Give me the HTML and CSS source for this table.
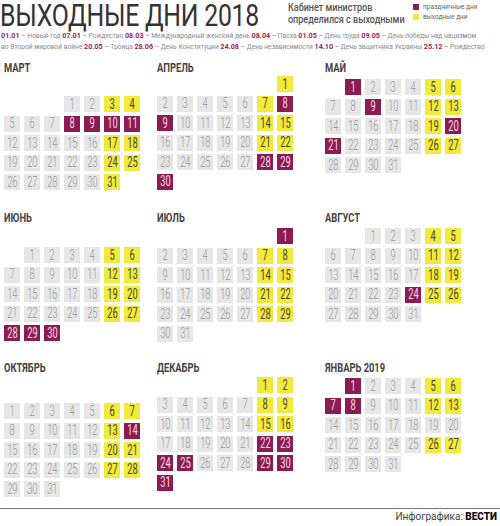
FILE: index.html
```html
<!DOCTYPE html>
<html lang="ru">
<head>
<meta charset="utf-8">
<title>Выходные дни 2018</title>
<link rel="stylesheet" href="styles.css">
</head>
<body>
<div class="page">
  <header class="top">
    <h1 class="title"><span>ВЫХОДНЫЕ ДНИ 2018</span></h1>
    <div class="sub"><span>Кабинет министров<br>определился с выходными</span></div>
    <ul class="legend">
      <li><span class="sw sw-h"></span>праздничные дни</li>
      <li><span class="sw sw-y"></span>выходные дни</li>
    </ul>
  </header>

  <div class="holidays">
    <p><b>01.01</b> – Новый год <b>07.01</b> – Рождество <b>08.03</b> – Международный женский день <b>08.04</b> – Пасха <b>01.05</b> – День труда <b>09.05</b> – День победы над нацизмом</p>
    <p>во Второй мировой войне <b>20.05</b> – Троица <b>28.06</b> – День Конституции <b>24.08</b> – День независимости <b>14.10</b> – День защитника Украины <b>25.12</b> – Рождество</p>
  </div>

  <div class="months">
    <section class="month m-mar">
      <h2>МАРТ</h2>
      <div class="cal">
        <i class="e"></i><i class="e"></i><i class="e"></i><i><span>1</span></i><i><span>2</span></i><i class="y"><span>3</span></i><i class="y"><span>4</span></i>
        <i><span>5</span></i><i><span>6</span></i><i><span>7</span></i><i class="h"><span>8</span></i><i class="h"><span>9</span></i><i class="h"><span>10</span></i><i class="h"><span>11</span></i>
        <i><span>12</span></i><i><span>13</span></i><i><span>14</span></i><i><span>15</span></i><i><span>16</span></i><i class="y"><span>17</span></i><i class="y"><span>18</span></i>
        <i><span>19</span></i><i><span>20</span></i><i><span>21</span></i><i><span>22</span></i><i><span>23</span></i><i class="y"><span>24</span></i><i class="y"><span>25</span></i>
        <i><span>26</span></i><i><span>27</span></i><i><span>28</span></i><i><span>29</span></i><i><span>30</span></i><i class="y"><span>31</span></i>
      </div>
    </section>
    <section class="month m-apr">
      <h2>АПРЕЛЬ</h2>
      <div class="cal">
        <i class="e"></i><i class="e"></i><i class="e"></i><i class="e"></i><i class="e"></i><i class="e"></i><i class="y"><span>1</span></i>
        <i><span>2</span></i><i><span>3</span></i><i><span>4</span></i><i><span>5</span></i><i><span>6</span></i><i class="y"><span>7</span></i><i class="h"><span>8</span></i>
        <i class="h"><span>9</span></i><i><span>10</span></i><i><span>11</span></i><i><span>12</span></i><i><span>13</span></i><i class="y"><span>14</span></i><i class="y"><span>15</span></i>
        <i><span>16</span></i><i><span>17</span></i><i><span>18</span></i><i><span>19</span></i><i><span>20</span></i><i class="y"><span>21</span></i><i class="y"><span>22</span></i>
        <i><span>23</span></i><i><span>24</span></i><i><span>25</span></i><i><span>26</span></i><i><span>27</span></i><i class="h"><span>28</span></i><i class="h"><span>29</span></i>
        <i class="h"><span>30</span></i>
      </div>
    </section>
    <section class="month m-may">
      <h2>МАЙ</h2>
      <div class="cal">
        <i class="e"></i><i class="h"><span>1</span></i><i><span>2</span></i><i><span>3</span></i><i><span>4</span></i><i class="y"><span>5</span></i><i class="y"><span>6</span></i>
        <i><span>7</span></i><i><span>8</span></i><i class="h"><span>9</span></i><i><span>10</span></i><i><span>11</span></i><i class="y"><span>12</span></i><i class="y"><span>13</span></i>
        <i><span>14</span></i><i><span>15</span></i><i><span>16</span></i><i><span>17</span></i><i><span>18</span></i><i class="y"><span>19</span></i><i class="h"><span>20</span></i>
        <i class="h"><span>21</span></i><i><span>22</span></i><i><span>23</span></i><i><span>24</span></i><i><span>25</span></i><i class="y"><span>26</span></i><i class="y"><span>27</span></i>
        <i><span>28</span></i><i><span>29</span></i><i><span>30</span></i><i><span>31</span></i>
      </div>
    </section>

    <section class="month m-jun">
      <h2>ИЮНЬ</h2>
      <div class="cal">
        <i class="e"></i><i><span>1</span></i><i><span>2</span></i><i><span>3</span></i><i><span>4</span></i><i class="y"><span>5</span></i><i class="y"><span>6</span></i>
        <i><span>7</span></i><i><span>8</span></i><i><span>9</span></i><i><span>10</span></i><i><span>11</span></i><i class="y"><span>12</span></i><i class="y"><span>13</span></i>
        <i><span>14</span></i><i><span>15</span></i><i><span>16</span></i><i><span>17</span></i><i><span>18</span></i><i class="y"><span>19</span></i><i class="y"><span>20</span></i>
        <i><span>21</span></i><i><span>22</span></i><i><span>23</span></i><i><span>24</span></i><i><span>25</span></i><i class="y"><span>26</span></i><i class="y"><span>27</span></i>
        <i class="h"><span>28</span></i><i class="h"><span>29</span></i><i class="h"><span>30</span></i>
      </div>
    </section>
    <section class="month m-jul">
      <h2>ИЮЛЬ</h2>
      <div class="cal">
        <i class="e"></i><i class="e"></i><i class="e"></i><i class="e"></i><i class="e"></i><i class="e"></i><i class="h"><span>1</span></i>
        <i><span>2</span></i><i><span>3</span></i><i><span>4</span></i><i><span>5</span></i><i><span>6</span></i><i class="y"><span>7</span></i><i class="y"><span>8</span></i>
        <i><span>9</span></i><i><span>10</span></i><i><span>11</span></i><i><span>12</span></i><i><span>13</span></i><i class="y"><span>14</span></i><i class="y"><span>15</span></i>
        <i><span>16</span></i><i><span>17</span></i><i><span>18</span></i><i><span>19</span></i><i><span>20</span></i><i class="y"><span>21</span></i><i class="y"><span>22</span></i>
        <i><span>23</span></i><i><span>24</span></i><i><span>25</span></i><i><span>26</span></i><i><span>27</span></i><i class="y"><span>28</span></i><i class="y"><span>29</span></i>
        <i><span>30</span></i><i><span>31</span></i>
      </div>
    </section>
    <section class="month m-aug">
      <h2>АВГУСТ</h2>
      <div class="cal">
        <i class="e"></i><i class="e"></i><i><span>1</span></i><i><span>2</span></i><i><span>3</span></i><i class="y"><span>4</span></i><i class="y"><span>5</span></i>
        <i><span>6</span></i><i><span>7</span></i><i><span>8</span></i><i><span>9</span></i><i><span>10</span></i><i class="y"><span>11</span></i><i class="y"><span>12</span></i>
        <i><span>13</span></i><i><span>14</span></i><i><span>15</span></i><i><span>16</span></i><i><span>17</span></i><i class="y"><span>18</span></i><i class="y"><span>19</span></i>
        <i><span>20</span></i><i><span>21</span></i><i><span>22</span></i><i><span>23</span></i><i class="h"><span>24</span></i><i class="y"><span>25</span></i><i class="y"><span>26</span></i>
        <i><span>27</span></i><i><span>28</span></i><i><span>29</span></i><i><span>30</span></i><i><span>31</span></i>
      </div>
    </section>

    <section class="month m-oct">
      <h2>ОКТЯБРЬ</h2>
      <div class="cal">
        <i><span>1</span></i><i><span>2</span></i><i><span>3</span></i><i><span>4</span></i><i><span>5</span></i><i class="y"><span>6</span></i><i class="y"><span>7</span></i>
        <i><span>8</span></i><i><span>9</span></i><i><span>10</span></i><i><span>11</span></i><i><span>12</span></i><i class="y"><span>13</span></i><i class="h"><span>14</span></i>
        <i><span>15</span></i><i><span>16</span></i><i><span>17</span></i><i><span>18</span></i><i><span>19</span></i><i class="y"><span>20</span></i><i class="y"><span>21</span></i>
        <i><span>22</span></i><i><span>23</span></i><i><span>24</span></i><i><span>25</span></i><i><span>26</span></i><i class="y"><span>27</span></i><i class="y"><span>28</span></i>
        <i><span>29</span></i><i><span>30</span></i><i><span>31</span></i>
      </div>
    </section>
    <section class="month m-dec">
      <h2>ДЕКАБРЬ</h2>
      <div class="cal">
        <i class="e"></i><i class="e"></i><i class="e"></i><i class="e"></i><i class="e"></i><i class="y"><span>1</span></i><i class="y"><span>2</span></i>
        <i><span>3</span></i><i><span>4</span></i><i><span>5</span></i><i><span>6</span></i><i><span>7</span></i><i class="y"><span>8</span></i><i class="y"><span>9</span></i>
        <i><span>10</span></i><i><span>11</span></i><i><span>12</span></i><i><span>13</span></i><i><span>14</span></i><i class="y"><span>15</span></i><i class="y"><span>16</span></i>
        <i><span>17</span></i><i><span>18</span></i><i><span>19</span></i><i><span>20</span></i><i><span>21</span></i><i class="h"><span>22</span></i><i class="h"><span>23</span></i>
        <i class="h"><span>24</span></i><i class="h"><span>25</span></i><i><span>26</span></i><i><span>27</span></i><i><span>28</span></i><i class="h"><span>29</span></i><i class="h"><span>30</span></i>
        <i class="h"><span>31</span></i>
      </div>
    </section>
    <section class="month m-jan">
      <h2>ЯНВАРЬ 2019</h2>
      <div class="cal">
        <i class="e"></i><i class="h"><span>1</span></i><i><span>2</span></i><i><span>3</span></i><i><span>4</span></i><i class="y"><span>5</span></i><i class="y"><span>6</span></i>
        <i class="h"><span>7</span></i><i class="h"><span>8</span></i><i><span>9</span></i><i><span>10</span></i><i><span>11</span></i><i class="y"><span>12</span></i><i class="y"><span>13</span></i>
        <i><span>14</span></i><i><span>15</span></i><i><span>16</span></i><i><span>17</span></i><i><span>18</span></i><i><span>19</span></i><i><span>20</span></i>
        <i><span>21</span></i><i><span>22</span></i><i><span>23</span></i><i><span>24</span></i><i><span>25</span></i><i class="y"><span>26</span></i><i class="y"><span>27</span></i>
        <i><span>28</span></i><i><span>29</span></i><i><span>30</span></i><i><span>31</span></i>
      </div>
    </section>
  </div>

  <footer class="foot">
    <span class="credit">Инфографика: <b>ВЕСТИ</b></span>
  </footer>
</div>
</body>
</html>
```

FILE: styles.css
```css
* { box-sizing: border-box; }
html, body { margin: 0; padding: 0; background: #fff; }
body { font-family: Roboto, "Liberation Sans", sans-serif; color: #333; }

.page { width: 500px; height: 526px; overflow: hidden; }

.top { display: flex; align-items: flex-start; height: 30px; }
.title {
  margin: 0; font-size: 32px; font-weight: 400; line-height: 30px;
  color: #333; white-space: nowrap;
  width: 288px; flex: none;
}
.title span {
  display: inline-block; transform: scaleX(0.775); transform-origin: left center;
  letter-spacing: -0.3px; margin-right: -76px;
}
.sub {
  font-size: 10.5px; line-height: 12px; font-weight: 500; color: #555;
  width: 125px; flex: none; padding-top: 2px; white-space: nowrap;
}
.sub span {
  display: inline-block; transform: scaleX(0.86); transform-origin: left center;
  margin-right: -19px;
}
.legend { list-style: none; margin: 0; padding: 2px 0 0; font-size: 6.5px; color: #666; }
.legend li { display: flex; align-items: center; height: 10px; }
.sw { width: 6px; height: 6px; margin-right: 4px; display: inline-block; }
.sw-h { background: #8c1c50; }
.sw-y { background: #f1ea3c; }

.holidays { padding-left: 1px; font-size: 7.4px; color: #8a8a8a; }
.holidays p {
  margin: 0; line-height: 11px; white-space: nowrap;
  transform: scaleX(0.9); transform-origin: left center;
}
.holidays b { color: #a3225a; font-weight: 700; font-size: 8px; }

.months {
  display: grid;
  grid-template-columns: 153px 168px 175px;
  grid-template-rows: 150px 150px 150px;
  padding-left: 4px; padding-top: 10px;
}
.month h2 {
  margin: 0; font-size: 13px; line-height: 12px; font-weight: 700; color: #444;
  transform: scaleX(0.72); transform-origin: left center; white-space: nowrap;
}
.cal {
  display: grid;
  grid-template-columns: repeat(7, 16px);
  grid-auto-rows: 16px;
  column-gap: 4px; row-gap: 3.5px;
}
.cal i {
  font-style: normal; background: #e6e6e6; color: #9b9b9b;
  display: flex; align-items: center; justify-content: center;
  font-size: 15px; font-weight: 300; line-height: 1;
}
.cal i span { display: inline-block; transform: scaleX(0.62); }
.cal i.e { background: transparent; }
.cal i.y { background: #f1ea3c; color: #4a4630; font-weight: 400; }
.cal i.h { background: #8c1c50; color: #f6dbe8; font-weight: 400; }

.m-mar .cal { margin-top: 22px; }
.m-apr .cal { margin-top: 2px; }
.m-may .cal { margin-top: 5px; }
.m-jun .cal { margin-top: 23px; }
.m-jul .cal { margin-top: 4px; }
.m-aug .cal { margin-top: 4px; }
.m-oct .cal { margin-top: 29px; }
.m-dec .cal { margin-top: 3px; }
.m-jan .cal { margin-top: 4px; }

.foot {
  border-top: 1.5px solid #777; margin-top: -4px;
  display: flex; justify-content: flex-end; padding: 2px 3px 0 0;
}
.credit { font-size: 10px; color: #444; }
.credit b { font-weight: 900; color: #111; }
```
